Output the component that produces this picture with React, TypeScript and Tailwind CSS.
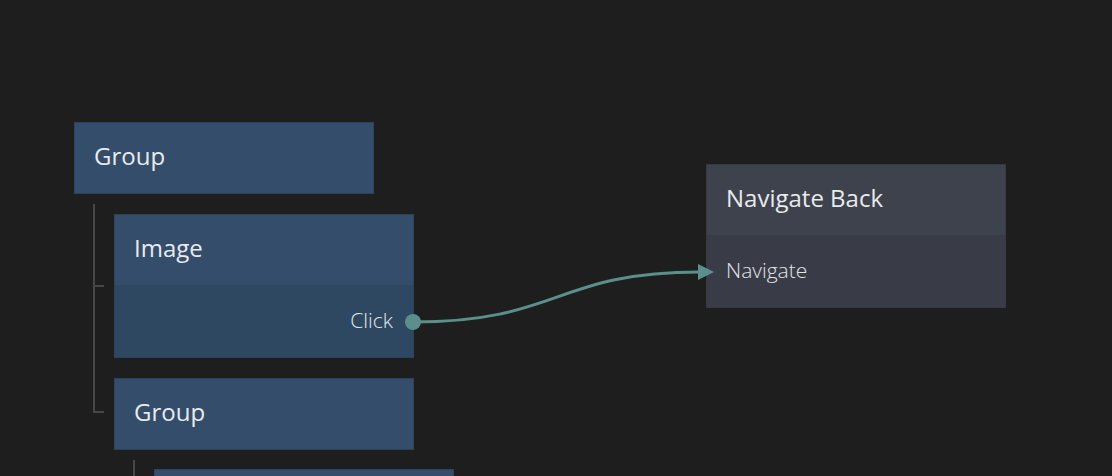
import React from "react";

type NodeProps = {
  x: number;
  y: number;
  title: string;
  tone: "blue" | "gray";
  children?: React.ReactNode;
};

// a node on the graph canvas: its place on the canvas is the content itself
function Node({ x, y, title, tone, children }: NodeProps) {
  const head = tone === "blue" ? "bg-[#344d6a]" : "bg-[#3e424d]";
  const body = tone === "blue" ? "bg-[#2f4862]" : "bg-[#393c47]";
  const border = tone === "blue" ? "border-[#2b425b]" : "border-[#363944]";
  return (
    <div
      className={`absolute w-[300px] flex flex-col border ${border} ${head}`}
      style={{ left: x, top: y }}
    >
      <div className="h-[70px] flex items-center pl-[19px] pr-5 pb-1 text-[24px] text-[#e8eaee]">
        {title}
      </div>
      {children && <div className={`h-[72px] flex items-center ${body}`}>{children}</div>}
    </div>
  );
}

export default function App() {
  return (
    <div
      className="relative w-[1112px] h-[476px] overflow-hidden bg-[#1e1e1e]"
      style={{ fontFamily: '"Open Sans", "Noto Sans", sans-serif' }}
    >
      {/* hierarchy lines */}
      <div className="absolute left-[93px] top-[204px] w-[11px] h-[209px] border-l-2 border-b-2 border-[#474747]" />
      <div className="absolute left-[93px] top-[285px] w-[11px] h-[2px] bg-[#474747]" />
      <div className="absolute left-[133px] top-[460px] w-[2px] h-[20px] bg-[#474747]" />

      <Node x={74} y={122} title="Group" tone="blue" />
      <Node x={114} y={214} title="Image" tone="blue">
        <span className="ml-auto pr-5 text-[21px] font-light text-[#e2e6eb]">Click</span>
      </Node>
      <Node x={114} y={378} title="Group" tone="blue" />
      <Node x={154} y={469} title="" tone="blue" />

      <Node x={706} y={164} title="Navigate Back" tone="gray">
        <span className="pl-[19px] text-[21px] font-light text-[#e2e4e8]">Navigate</span>
      </Node>

      {/* connection wire */}
      <svg className="absolute left-0 top-0" width="1112" height="476">
        <path
          d="M413 322 C 560 322, 555 272, 700 272"
          fill="none"
          stroke="#5b8f8b"
          strokeWidth="3"
        />
        <circle cx="413" cy="322" r="8" fill="#5b8f8b" />
        <polygon points="698,264 714,272 698,280" fill="#5b8f8b" />
      </svg>
    </div>
  );
}
